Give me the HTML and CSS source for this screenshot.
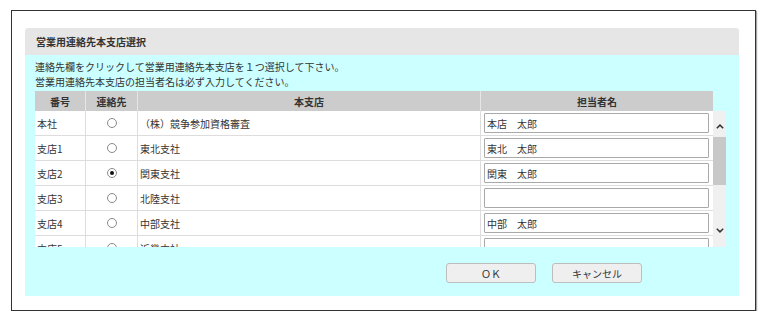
FILE: index.html
```html
<!DOCTYPE html>
<html lang="ja">
<head>
  <meta charset="UTF-8" />
  <title>営業用連絡先本支店選択</title>
  <link rel="stylesheet" href="styles.css">
</head>
<body>
  <div class="dialog">
    <section class="panel">
      <div class="panel-title">営業用連絡先本支店選択</div>
      <div class="panel-body">
        <p class="note">連絡先欄をクリックして営業用連絡先本支店を１つ選択して下さい。<br>営業用連絡先本支店の担当者名は必ず入力してください。</p>

        <div class="grid-row grid-head">
          <div class="cell center">番号</div>
          <div class="cell center">連絡先</div>
          <div class="cell center">本支店</div>
          <div class="cell center">担当者名</div>
        </div>

        <div class="grid-wrap">
          <div class="grid-rows">
            <div class="grid-row">
              <div class="cell">本社</div>
              <div class="cell center"><span class="radio"></span></div>
              <div class="cell">（株）競争参加資格審査</div>
              <div class="cell"><input class="name" type="text" value="本店　太郎"></div>
            </div>
            <div class="grid-row">
              <div class="cell">支店1</div>
              <div class="cell center"><span class="radio"></span></div>
              <div class="cell">東北支社</div>
              <div class="cell"><input class="name" type="text" value="東北　太郎"></div>
            </div>
            <div class="grid-row">
              <div class="cell">支店2</div>
              <div class="cell center"><span class="radio checked"></span></div>
              <div class="cell">関東支社</div>
              <div class="cell"><input class="name" type="text" value="関東　太郎"></div>
            </div>
            <div class="grid-row">
              <div class="cell">支店3</div>
              <div class="cell center"><span class="radio"></span></div>
              <div class="cell">北陸支社</div>
              <div class="cell"><input class="name" type="text" value=""></div>
            </div>
            <div class="grid-row">
              <div class="cell">支店4</div>
              <div class="cell center"><span class="radio"></span></div>
              <div class="cell">中部支社</div>
              <div class="cell"><input class="name" type="text" value="中部　太郎"></div>
            </div>
            <div class="grid-row">
              <div class="cell">支店5</div>
              <div class="cell center"><span class="radio"></span></div>
              <div class="cell">近畿支社</div>
              <div class="cell"><input class="name" type="text" value=""></div>
            </div>
          </div>
          <div class="scrollbar">
            <svg class="arrow up" width="8" height="5" viewBox="0 0 8 5"><path d="M0.8 4.3 L4 1.1 L7.2 4.3" fill="none" stroke="#333" stroke-width="1.5"/></svg>
            <div class="thumb"></div>
            <div class="track"></div>
            <svg class="arrow down" width="8" height="5" viewBox="0 0 8 5"><path d="M0.8 0.7 L4 3.9 L7.2 0.7" fill="none" stroke="#333" stroke-width="1.5"/></svg>
          </div>
        </div>

        <div class="actions">
          <button class="btn">ＯＫ</button>
          <button class="btn">キャンセル</button>
        </div>
      </div>
    </section>
  </div>
</body>
</html>
```

FILE: styles.css
```css
:root {
  --text: #333333;
  --title-bg: #e6e6e6;
  --body-bg: #ccffff;
  --head-bg: #cccccc;
  --line: #dddddd;
}

* {
  box-sizing: border-box;
}

body {
  margin: 0;
  background: #fff;
  color: var(--text);
  font-family: "Noto Sans CJK JP", "Noto Sans", sans-serif;
  font-size: 10px;
}

.dialog {
  width: 745px;
  height: 301px;
  margin: 10px 0 0 11px;
  padding: 17px 16px 14px 13px;
  border: 1px solid #333;
  box-shadow: 1px 1px 1px rgba(0,0,0,0.35);
  background: #fff;
}

.panel {
  width: 714px;
  height: 268px;
  display: flex;
  flex-direction: column;
}

.panel-title {
  height: 27px;
  padding-left: 11px;
  display: flex;
  align-items: center;
  background: var(--title-bg);
  border-radius: 3px 3px 0 0;
  font-weight: bold;
}

.panel-body {
  flex: 1;
  background: var(--body-bg);
  padding: 4px 10px 0 10px;
}

.note {
  margin: 0 0 2px 0;
  line-height: 15px;
}

.grid-row {
  display: grid;
  grid-template-columns: 51px 52px 343px 232px;
  width: 678px;
  height: 25px;
  background: #fff;
  border-bottom: 1px solid var(--line);
}

.grid-row .cell {
  display: flex;
  align-items: center;
  padding-left: 2px;
  border-right: 1px solid var(--line);
  white-space: nowrap;
}

.grid-row .cell:last-child {
  border-right: none;
  padding: 0 4px 0 3px;
}

.grid-row .cell.center {
  justify-content: center;
  padding: 0;
}

.grid-head {
  height: 20px;
  background: var(--head-bg);
  border-bottom: none;
  font-weight: bold;
}

.grid-head .cell {
  border-right: 1px solid #e6e6e6;
}

.grid-wrap {
  display: flex;
  height: 136px;
}

.grid-rows {
  width: 678px;
  height: 136px;
  overflow: hidden;
}

.scrollbar {
  width: 13px;
  height: 136px;
  background: #f0f0f0;
  display: flex;
  flex-direction: column;
  align-items: center;
}

.arrow.up {
  margin-top: 13px;
}

.thumb {
  width: 13px;
  height: 48px;
  margin-top: 8px;
  background: #c8c8c8;
}

.track {
  flex: 1;
}

.arrow.down {
  margin-bottom: 14px;
}

.name {
  width: 100%;
  height: 20px;
  margin: 0;
  padding: 0 2px;
  border: 1px solid #a9a9a9;
  border-radius: 1px;
  background: #fff;
  color: var(--text);
  font-family: inherit;
  font-size: 10px;
}

.radio {
  width: 10px;
  height: 10px;
  border: 1px solid #8a8a8a;
  border-radius: 50%;
  background: #fff;
  display: flex;
  align-items: center;
  justify-content: center;
}

.radio.checked::after {
  content: "";
  width: 4px;
  height: 4px;
  border-radius: 50%;
  background: #111;
}

.actions {
  display: flex;
  gap: 16px;
  margin-top: 16px;
  padding-left: 411px;
}

.btn {
  width: 90px;
  height: 20px;
  padding: 0;
  border: 1px solid #bdbdbd;
  border-radius: 3px;
  background: #efefef;
  color: var(--text);
  font-family: inherit;
  font-size: 10px;
}
```
